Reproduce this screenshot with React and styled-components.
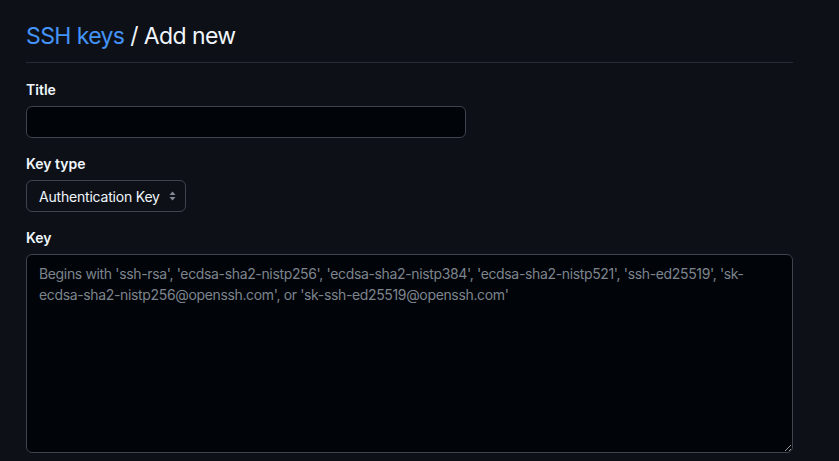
import React from 'react';
import styled, { createGlobalStyle } from 'styled-components';

const GlobalStyle = createGlobalStyle`
  html, body {
    margin: 0;
    background: #0d1117;
  }
  body {
    font-family: Inter, "Liberation Sans", sans-serif;
    color: #f0f6fc;
  }
`;

const Page = styled.div`
  padding: 18px 46px 0 26px;
  width: 767px;
`;

const Subhead = styled.div`
  border-bottom: 1px solid #262c36;
  padding-bottom: 8px;
  margin-bottom: 16px;
`;

const Heading = styled.h1`
  margin: 0;
  font-size: 23px;
  line-height: 36px;
  font-weight: 400;
  letter-spacing: -0.6px;
  color: #f0f6fc;
`;

const Crumb = styled.a`
  color: #4493f8;
  text-decoration: none;
`;

const FormGroup = styled.div`
  margin-bottom: 15px;
`;

const Label = styled.label`
  display: block;
  font-size: 14px;
  line-height: 21px;
  font-weight: 600;
  margin-bottom: 6px;
`;

const Input = styled.input`
  box-sizing: border-box;
  display: block;
  width: ${(p) => p.$width}px;
  height: 32px;
  padding: 5px 12px;
  background: #010409;
  border: 1px solid #3d444d;
  border-radius: 6px;
  color: #f0f6fc;
  font: inherit;
  font-size: 14px;
  outline: none;
`;

const SelectBox = styled.div`
  box-sizing: border-box;
  display: flex;
  align-items: center;
  justify-content: space-between;
  width: 160px;
  height: 32px;
  padding: 0 9px 0 12px;
  background: #0d1117;
  border: 1px solid #3d444d;
  border-radius: 6px;
  font-size: 14px;
  letter-spacing: -0.2px;
  color: #f0f6fc;
`;

const TextArea = styled.textarea`
  box-sizing: border-box;
  display: block;
  width: 100%;
  height: 199px;
  padding: 8px 12px;
  background: #010409;
  border: 1px solid #3d444d;
  border-radius: 6px;
  color: #f0f6fc;
  font: inherit;
  font-size: 14px;
  line-height: 21px;
  letter-spacing: -0.35px;
  outline: none;
  resize: vertical;

  &::placeholder {
    color: #7d848d;
  }
`;

const Arrows = () => (
  <svg width="7" height="10" viewBox="0 0 7 10">
    <path d="M3.5 0.5 L6.5 4 H0.5 Z" fill="#848b94" />
    <path d="M3.5 9.5 L6.5 6 H0.5 Z" fill="#848b94" />
  </svg>
);

export default function App() {
  return (
    <>
      <GlobalStyle />
      <Page>
        <Subhead>
          <Heading>
            <Crumb href="#">SSH keys</Crumb> / Add new
          </Heading>
        </Subhead>
        <FormGroup>
          <Label>Title</Label>
          <Input $width={440} />
        </FormGroup>
        <FormGroup>
          <Label>Key type</Label>
          <SelectBox>
            <span>Authentication Key</span>
            <Arrows />
          </SelectBox>
        </FormGroup>
        <FormGroup>
          <Label>Key</Label>
          <TextArea placeholder="Begins with 'ssh-rsa', 'ecdsa-sha2-nistp256', 'ecdsa-sha2-nistp384', 'ecdsa-sha2-nistp521', 'ssh-ed25519', 'sk-ecdsa-sha2-nistp256@openssh.com', or 'sk-ssh-ed25519@openssh.com'" />
        </FormGroup>
      </Page>
    </>
  );
}
